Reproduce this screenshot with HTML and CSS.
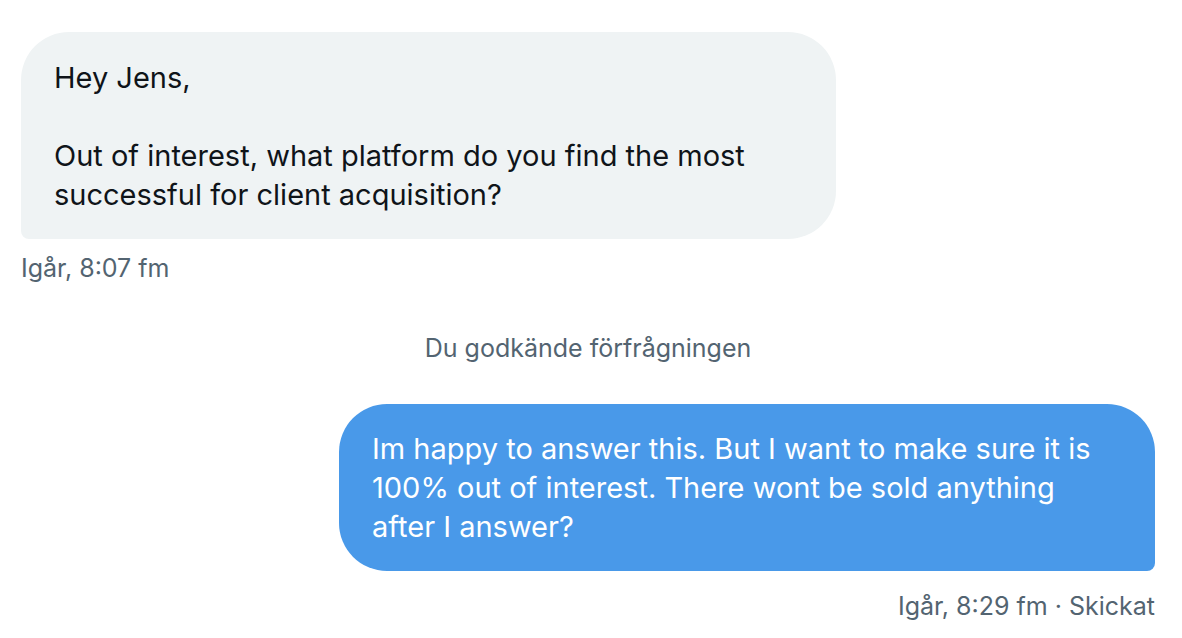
FILE: index.html
```html
<!DOCTYPE html>
<html>
<head>
<meta charset="utf-8">
<link rel="stylesheet" href="styles.css">
</head>
<body>
<div class="chat">
  <div class="msg in">
    <div class="bubble">Hey Jens,<br><br>Out of interest, what platform do you find the most<br>successful for client acquisition?</div>
    <div class="meta">Igår, 8:07 fm</div>
  </div>
  <div class="notice">Du godkände förfrågningen</div>
  <div class="msg out">
    <div class="bubble">Im happy to answer this. But I want to make sure it is<br>100% out of interest. There wont be sold anything<br>after I answer?</div>
    <div class="meta">Igår, 8:29 fm · Skickat</div>
  </div>
</div>
</body>
</html>
```
FILE: styles.css
```css
html, body {
  margin: 0;
  padding: 0;
  background: #ffffff;
}
body {
  font-family: Inter, "Noto Sans", sans-serif;
  width: 1182px;
  height: 638px;
  overflow: hidden;
}
.chat {
  display: flex;
  flex-direction: column;
  padding: 32px 27px 0 21px;
}
.msg {
  display: flex;
  flex-direction: column;
}
.msg.in { align-items: flex-start; }
.msg.out { align-items: flex-end; }
.bubble {
  width: 815px;
  box-sizing: border-box;
  font-size: 29px;
  line-height: 39px;
  white-space: nowrap;
}
.in .bubble {
  background: #eff3f4;
  color: #0f1419;
  border-radius: 48px 48px 48px 8px;
  padding: 26px 33px 25px 33px;
}
.out .bubble {
  width: 816px;
  background: #4999e9;
  color: #ffffff;
  border-radius: 48px 48px 8px 48px;
  padding: 25px 33px 25px 33px;
}
.meta {
  color: #536471;
  font-size: 25px;
  line-height: 32px;
  margin-top: 13px;
}
.out .meta {
  margin-top: 19px;
}
.notice {
  align-self: center;
  color: #536471;
  font-size: 25px;
  line-height: 32px;
  margin: 48px 0 40px 0;
}
```
